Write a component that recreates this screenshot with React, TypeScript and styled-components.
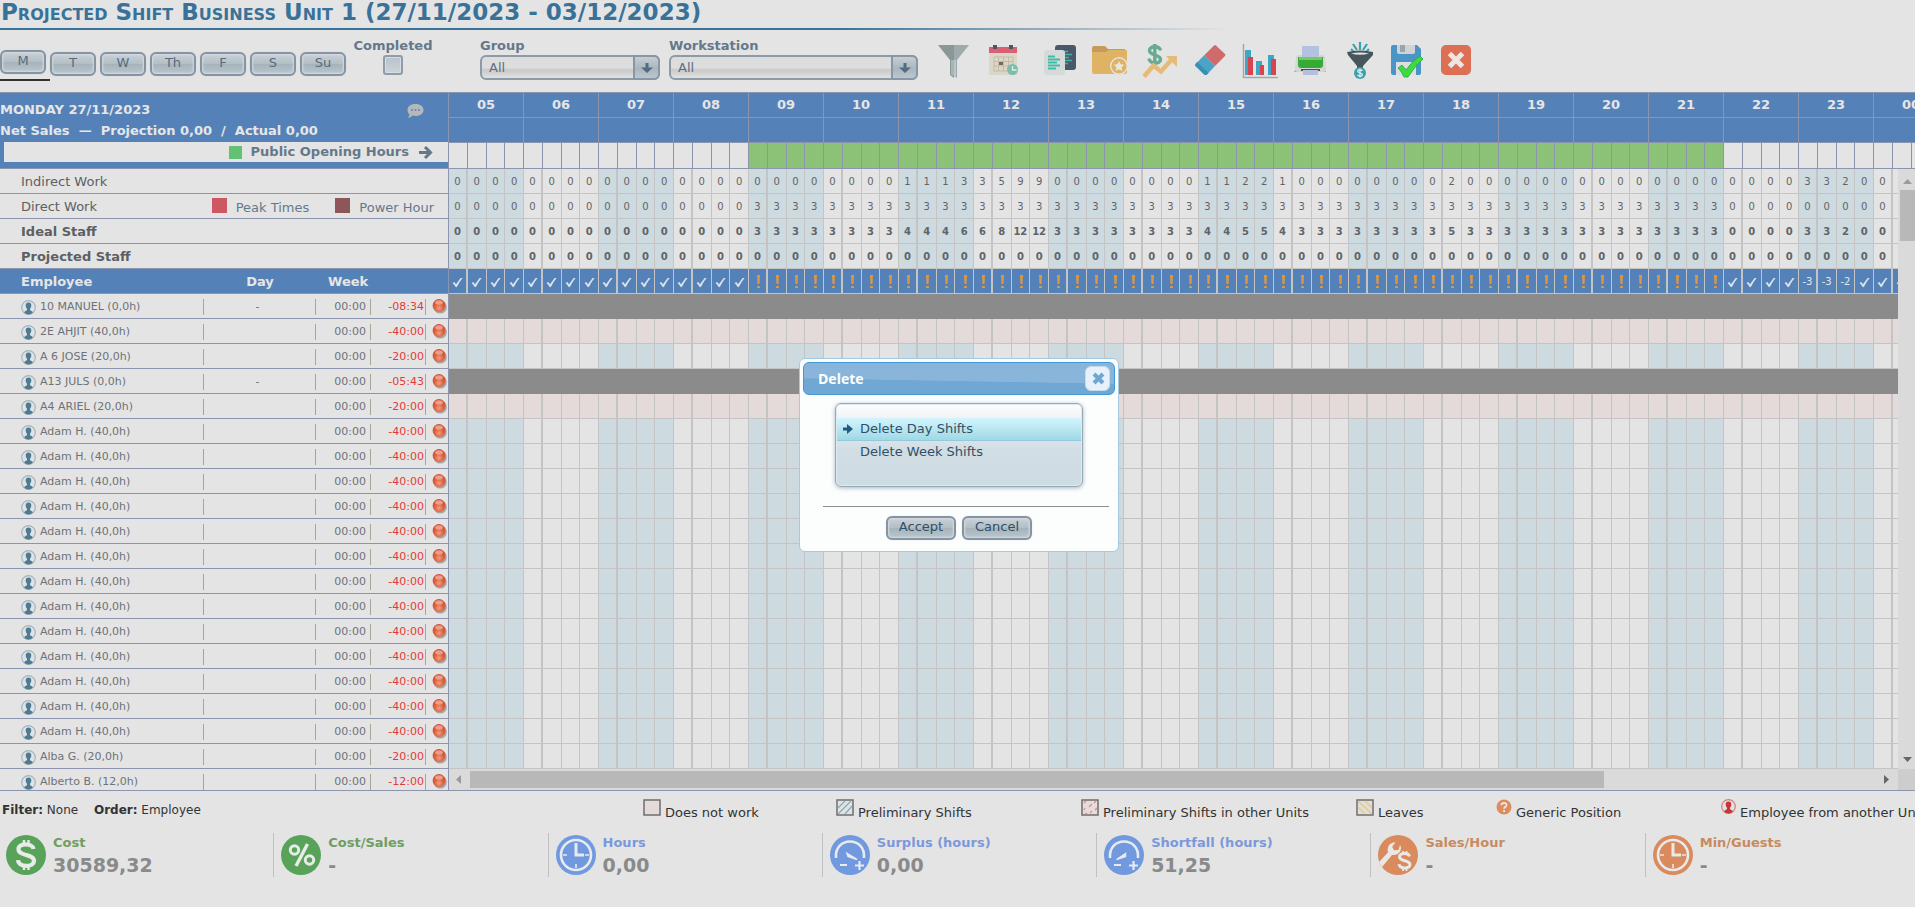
import React from "react";
import styled, { createGlobalStyle, css } from "styled-components";

const GlobalStyle = createGlobalStyle`
  *, *::before, *::after { box-sizing: border-box; }
  body {
    margin: 0;
    background: #e4e4e4;
    color: #333;
    font: 13px/16px "DejaVu Sans", Verdana, sans-serif;
    overflow: hidden;
  }
  button, select { font: inherit; margin: 0; }
`;

const LINE = "#8c95ad";
const BLUE = "#5482b8";
const CELL_LINE = "#c4c4c4";

/* ---------- title ---------- */

const Title = styled.h1`
  margin: 0;
  height: 28px;
  padding-left: 1px;
  overflow: hidden;
  font-size: 23px;
  line-height: 24px;
  font-weight: bold;
  font-variant: small-caps;
  white-space: nowrap;
  color: #387299;
`;

const TitleRule = styled.div`
  width: 1230px;
  max-width: 100%;
  height: 2px;
  background: linear-gradient(to right, #387299 68%, #e4e4e4);
`;

/* ---------- toolbar ---------- */

const Toolbar = styled.div`
  display: flex;
  align-items: flex-start;
  height: 62px;
`;

const Days = styled.div`
  display: flex;
  padding-top: 20px;
`;

const DayTab = styled.div<{ $active: boolean }>`
  width: 50px;
  height: 31px;
  padding: ${(p) => (p.$active ? "0 4px 5px 0" : "2px 4px 0 0")};
  border-bottom: 2px solid ${(p) => (p.$active ? "#333" : "transparent")};
`;

const metal = css`
  border: 2px solid #8494a2;
  border-radius: 6px;
  background: linear-gradient(#cbd1d6 0%, #b3bec6 48%, #a6b3bc 52%, #bac6cd 100%);
  box-shadow: inset 0 0 2px 1px #d5dbe0, 0 0 1px #b4bfc8;
`;

const PushButton = styled.button<{ $width: number; $dark?: boolean }>`
  ${metal}
  width: ${(p) => p.$width}px;
  height: 24px;
  padding: 0 0 2px;
  line-height: 18px;
  text-align: center;
  color: ${(p) => (p.$dark ? "#2f4f66" : "#586b7c")};
`;

const Field = styled.label<{ $width: number; $left: number; $center?: boolean }>`
  display: flex;
  flex-direction: column;
  align-items: ${(p) => (p.$center ? "center" : "stretch")};
  gap: 1px;
  width: ${(p) => p.$width}px;
  margin-left: ${(p) => p.$left}px;
  padding-top: 8px;
  font-weight: bold;
  white-space: nowrap;
  color: #64788c;
`;

const CheckInput = styled.input`
  appearance: none;
  margin: 0;
  width: 20px;
  height: 20px;
  border: 2px solid #8e9dab;
  border-radius: 3px;
  background: linear-gradient(#b9c2ca, #cdd3d8);
  box-shadow: inset 0 0 0 1px #d7dce0;
`;

const SelectBox = styled.span`
  display: grid;
  grid-template-columns: 1fr 27px;
  height: 25px;
`;

const SelectInput = styled.select`
  grid-area: 1 / 1 / 2 / 3;
  appearance: none;
  width: 100%;
  height: 25px;
  padding: 1px 30px 0 7px;
  border: 2px solid #8c9ba8;
  border-radius: 6px;
  background: linear-gradient(#dcdcdc 0%, #dedede 50%, #c9c9c9 62%, #e2e2e2 100%);
  font-weight: normal;
  color: #5b6f82;
`;

const SelectArrow = styled.span`
  grid-area: 1 / 2 / 2 / 3;
  display: flex;
  align-items: center;
  justify-content: center;
  border: 2px solid #8797a5;
  border-radius: 0 6px 6px 0;
  background: linear-gradient(#c6cdd3, #a9b6c0 55%, #bcc7cf);
  pointer-events: none;
`;

const Tools = styled.div`
  display: flex;
  padding: 10px 0 0 11px;
`;

const ToolButton = styled.button<{ $after?: number }>`
  display: flex;
  justify-content: center;
  width: 50px;
  height: 40px;
  margin-right: ${(p) => p.$after ?? 0}px;
  padding: 0;
  border: 0;
  background: none;
`;

/* ---------- workspace ---------- */

const Workspace = styled.main`
  display: grid;
  grid-template-columns: 449px minmax(0, 1fr);
  border-top: 1px solid ${LINE};
  border-bottom: 1px solid ${LINE};
`;

const LeftPanel = styled.section`
  min-width: 0;
  border-right: 1px solid ${LINE};
`;

const DayHeader = styled.header`
  height: 76px;
  padding-top: 6px;
  border-bottom: 1px solid ${LINE};
  background: ${BLUE};
  color: #e6e6e6;
  font-weight: bold;
`;

const HeaderLine = styled.div`
  display: flex;
  align-items: center;
  justify-content: space-between;
  height: 21px;
  padding: 0 24px 0 0;
  white-space: pre;
`;

const OpeningBar = styled.div`
  display: flex;
  align-items: center;
  justify-content: flex-end;
  gap: 9px;
  height: 20px;
  margin: 1px 0 0 4px;
  padding-right: 15px;
  background: #e4e4e4;
  color: #64788c;
  white-space: nowrap;
`;

const Swatch = styled.i<{ $color: string; $size: number }>`
  flex: none;
  width: ${(p) => p.$size}px;
  height: ${(p) => p.$size}px;
  background: ${(p) => p.$color};
`;

const Scroller = styled.div`
  height: calc(100vh - 286px);
  overflow: hidden;
`;

const StaffTable = styled.table`
  width: 100%;
  table-layout: fixed;
  border-spacing: 0;
  white-space: nowrap;
`;

const SummaryCell = styled.th<{ $bold?: boolean }>`
  height: 25px;
  padding: 2px 14px 0 21px;
  border-bottom: 1px solid ${LINE};
  text-align: left;
  font-weight: ${(p) => (p.$bold ? "bold" : "normal")};
  color: #5c6064;
`;

const SummaryLine = styled.div`
  display: flex;
  align-items: center;
  justify-content: space-between;
  height: 18px;
`;

const Key = styled.span`
  display: inline-flex;
  align-items: flex-end;
  gap: 9px;
  height: 18px;
  margin-left: 26px;
  color: #64788c;
  i { align-self: flex-start; }
`;

const ColumnTitle = styled.th<{ $left?: number; $center?: boolean }>`
  height: 25px;
  padding: 1px 0 0 ${(p) => p.$left ?? 0}px;
  border-bottom: 1px solid ${LINE};
  background: ${BLUE};
  color: #e6e6e6;
  text-align: ${(p) => (p.$center ? "center" : "left")};
`;

const StaffCell = styled.td`
  height: 25px;
  padding: 2px 0 0;
  border-bottom: 1px solid ${LINE};
  font-size: 11px;
  color: #6e7278;
`;

const CellInner = styled.div<{ $align?: string; $red?: boolean; $plain?: boolean }>`
  display: flex;
  align-items: center;
  justify-content: ${(p) => p.$align ?? "flex-start"};
  gap: 4px;
  height: 16px;
  padding: 0 ${(p) => (p.$red ? 1 : 4)}px 0 0;
  border-right: ${(p) => (p.$plain ? "0" : "1px solid #a5a598")};
  color: ${(p) => (p.$red ? "#e23a3a" : "inherit")};
`;

const PersonInner = styled(CellInner)`
  padding-left: 21px;
`;

/* ---------- schedule ---------- */

const Schedule = styled.section`
  min-width: 0;
  overflow: hidden;
`;

const HourTable = styled.table`
  width: 1500px;
  table-layout: fixed;
  border-spacing: 0;
`;

const HourTitle = styled.th`
  height: 25px;
  padding: 0;
  border-right: 1px solid #8c95ad;
  border-bottom: 1px solid #8c95ad;
  background: ${BLUE};
  color: #e6e6e6;
`;

const OpenCell = styled.td<{ $open: boolean }>`
  height: 26px;
  padding: 0;
  border-right: 1px solid ${LINE};
  border-bottom: 1px solid ${LINE};
  background: ${(p) => (p.$open ? "#8bc278" : "#e4e4e4")};
`;

const ScheduleView = styled.div`
  display: grid;
  grid-template-columns: minmax(0, 1fr) 17px;
  grid-template-rows: minmax(0, 1fr) 21px;
  height: calc(100vh - 286px);
`;

const TableClip = styled.div`
  overflow: hidden;
`;

type Tone = "band" | "plain" | "pink" | "gray" | "blue";
const toneColor: Record<Tone, string> = {
  band: "#cddadf",
  plain: "#e4e4e4",
  pink: "#e5dada",
  gray: "#8b8b8b",
  blue: BLUE,
};

const Slot = styled.td<{ $tone: Tone; $wide: boolean; $bold?: boolean }>`
  height: 25px;
  padding: 2px 0 0;
  border: 0 solid ${(p) => (p.$tone === "gray" ? "#8b8b8b" : CELL_LINE)};
  border-right-width: ${(p) => (p.$wide ? 2 : 1)}px;
  border-bottom-width: 1px;
  background: ${(p) => toneColor[p.$tone]};
  color: ${(p) => (p.$tone === "blue" ? "#e6e6e6" : "#606468")};
  font-size: 10px;
  font-weight: ${(p) => (p.$bold ? "bold" : "normal")};
  text-align: center;
  line-height: 12px;
  svg { display: block; margin: 0 auto; }
`;

const VBar = styled.div`
  display: flex;
  flex-direction: column;
  align-items: center;
  background: #dadada;
  padding: 8px 0 5px 2px;
`;

const VThumb = styled.div`
  width: 15px;
  height: 51px;
  margin: 4px 0 auto;
  background: #b8b8b8;
`;

const HBar = styled.div`
  display: flex;
  align-items: center;
  padding: 0 8px 0 6px;
  background: #dadada;
`;

const HThumb = styled.div`
  width: 79%;
  height: 17px;
  margin: 0 auto 0 6px;
  background: #b8b8b8;
`;

const Corner = styled.div`
  background: #cdcdcd;
`;

/* ---------- footer ---------- */

const LegendRow = styled.div`
  display: grid;
  grid-template-columns: 643px minmax(0, 1fr);
  height: 42px;
  overflow: hidden;
  white-space: nowrap;
`;

const FilterText = styled.p`
  margin: 0;
  padding: 11px 0 0 2px;
  font-size: 12px;
  b:last-of-type { margin-left: 12px; }
`;

const LegendItems = styled.div`
  display: grid;
  grid-template-columns: 193fr 245fr 275fr 140fr 225fr 194fr;
  padding-top: 8px;
`;

const LegendItem = styled.span`
  display: flex;
  gap: 4px;
  width: 0;
  line-height: 28px;
  svg { flex: none; }
`;

const Kpis = styled.div`
  display: grid;
  grid-template-columns: repeat(7, minmax(0, 1fr));
  margin: 0 -4px 0 -1px;
`;

const Kpi = styled.div`
  display: flex;
  gap: 7px;
  height: 44px;
  padding: 2px 0 0 7px;
  & + & { border-left: 1px solid #c0c0c0; }
`;

const KpiText = styled.div<{ $color: string }>`
  font-weight: bold;
  white-space: nowrap;
  color: ${(p) => p.$color};
  strong {
    display: block;
    margin-top: 2px;
    font-size: 19px;
    line-height: 24px;
    color: #8a8a8a;
  }
`;

/* ---------- dialog ---------- */

const Overlay = styled.div`
  position: fixed;
  inset: 0;
  display: grid;
  place-items: center;
  padding: 3px 0 0 3px;
`;

const Dialog = styled.div`
  width: 320px;
  height: 194px;
  padding: 3px;
  border: 1px solid #a6c9e2;
  border-radius: 6px;
  background: #fcfdfd;
`;

const DialogBar = styled.div`
  display: flex;
  align-items: center;
  justify-content: space-between;
  height: 33px;
  padding: 0 4px 0 14px;
  border: 1px solid #4297d7;
  border-radius: 6px;
  background: linear-gradient(181deg, #89b5da 0 56%, #71a8d3 58% 100%);
  color: #fff;
  font: bold 14px/20px "Open Sans", sans-serif;
`;

const CloseButton = styled.button`
  display: flex;
  align-items: center;
  justify-content: center;
  width: 25px;
  height: 25px;
  padding: 0 0 0 2px;
  border: 1px solid #c5dbec;
  border-radius: 6px;
  background: #e8f1fa;
`;

const OptionList = styled.div`
  height: 84px;
  width: 248px;
  margin: 8px 0 0 32px;
  padding: 14px 1px 0;
  border: 1px solid #94aab6;
  border-radius: 6px;
  background: linear-gradient(#fdfdfe 0%, #e6ebef 30%, #d2dde4 55%, #cedce3 100%);
  box-shadow: inset 0 0 0 1px #dcebf2, 0 1px 4px #a9b6c0;
`;

const Option = styled.button<{ $selected: boolean }>`
  display: flex;
  align-items: center;
  gap: 7px;
  width: 100%;
  height: 23px;
  padding: 0 0 1px 6px;
  border: 0;
  border-bottom: 1px solid ${(p) => (p.$selected ? "#8fcbdb" : "transparent")};
  background: ${(p) => (p.$selected ? "linear-gradient(#d3f5fd, #a0d8e5)" : "none")};
  color: #2f5068;
  text-align: left;
`;

const DialogRule = styled.hr`
  width: 286px;
  height: 1px;
  margin: 19px 0 9px 20px;
  border: 0;
  background: #8f8f8f;
`;

const DialogActions = styled.div`
  display: flex;
  justify-content: center;
  gap: 6px;
`;

/* ---------- icons ---------- */

const Svg = ({ size = 40, children }: { size?: number; children: React.ReactNode }) => (
  <svg width={size} height={size} viewBox={`0 0 ${size} ${size}`} fill="none" aria-hidden="true">
    {children}
  </svg>
);

const FunnelIcon = () => (
  <Svg>
    <path d="M4 5h16v33l-4-3V20z" fill="#8a9797" />
    <path d="M20 5h15L23 20v18l-3-2z" fill="#9eabac" />
    <path d="M17 20h3v16l-3-1z" fill="#a9b4b7" />
    <path d="M20 20h2v17l-2-1z" fill="#bcc5c8" />
  </Svg>
);

const CalendarIcon = () => (
  <Svg>
    <path d="M5 12h28v23H5z" fill="#dad6c8" />
    <path d="M5 7h28v6H5z" fill="#da5f70" />
    <path d="M9 5h4v4H9zM25 5h4v4h-4z" fill="#46586b" />
    <path d="M10 17h19v14H10zM10 21.500h19M10 26h19M14.500 17v14M19.500 17v14M24.500 17v14" stroke="#c3bba6" />
    <path d="M15 22h4v3h-4z" fill="#7f6456" />
    <circle cx="28.500" cy="29.500" r="5.500" fill="#7dbdab" />
    <path d="M28.500 26v4h4" stroke="#dfeee8" strokeWidth="1.300" />
  </Svg>
);

const PagesIcon = () => (
  <Svg>
    <rect x="15" y="5" width="21" height="25" rx="3" fill="#4a5969" />
    <path d="M22 11.500h6M22 14.500h10M22 17.500h7M22 20.500h10M22 23.500h6" stroke="#42b3a2" strokeWidth="1.500" />
    <rect x="4" y="10" width="21" height="25" rx="3" fill="#d4dada" />
    <path d="M8 16.500h7M8 19.500h12M8 22.500h9M8 25.500h12M8 28.500h8" stroke="#42bba6" strokeWidth="1.900" />
  </Svg>
);

const FolderIcon = () => (
  <Svg>
    <path d="M2 8q0-2 2-2h11l3 3h17v6H2z" fill="#c59a5c" />
    <path d="M2 12h14l3-2h17q1 0 1 1v21q0 2-2 2H4q-2 0-2-2z" fill="#e0b364" />
    <circle cx="29" cy="26" r="9" fill="#e4e4e4" />
    <circle cx="29" cy="26" r="7.600" fill="#e0b364" />
    <path d="M29 21l1.600 3.300 3.600.5-2.600 2.500.6 3.600-3.200-1.700-3.200 1.700.6-3.600-2.600-2.500 3.600-.5z" fill="#e9e6df" />
  </Svg>
);

const MoneyTrendIcon = () => (
  <Svg>
    <path d="M20.500 10.500c-1-5-11-5-11 0 0 5.500 11 3.500 11 9 0 5-11 5-11.500-1M14.800 4v22" stroke="#68ab90" strokeWidth="3.400" />
    <path d="M4 36.500l9.500-11 7.500 6L33 18" stroke="#e5bb78" strokeWidth="4.500" />
    <path d="M26 16h11v11z" fill="#e5bb78" />
  </Svg>
);

const EraserIcon = () => (
  <Svg>
    <path d="M24 5.500q1-1 2 0l9 8.500q1 1 0 2l-10 10L14 15.500z" fill="#cd6c6a" />
    <path d="M14 15.500L25 26l-8 8.500q-1.500 1-3 0l-8.500-8.200q-1-1.300 0-2.300z" fill="#4ba3c5" />
    <path d="M5 25l9 9.300q2 1.200 3 .2l1.500-1.700L7 22z" fill="#3a8fb1" />
  </Svg>
);

const ChartIcon = () => (
  <Svg>
    <path d="M3.500 4v33.500H38" stroke="#a3a6a8" strokeWidth="1.400" />
    <path d="M5 10h6v25H5zM16 21h6v14h-6zM28 15h6v20h-6z" fill="#3ea5c4" />
    <path d="M8 17h5v18H8zM20 25h4v10h-4zM31 19h5v16h-5z" fill="#d8444e" />
  </Svg>
);

const PrinterIcon = () => (
  <Svg>
    <path d="M4 32q0-2 3-2h26q3 0 3 2z" fill="#a9aca9" />
    <path d="M6 17q0-2 3-2h23q3 0 3 2l1 12q0 3-3 3H8q-3 0-3-3z" fill="#d3d6d3" />
    <path d="M12 6h17v12H12z" fill="#b4c1df" />
    <path d="M8 17h25v8q0 3-3 3H11q-3 0-3-3z" fill="#35ab35" />
    <path d="M9 17h23v3H9z" fill="#6fcb62" />
    <path d="M11 29h19v2H11z" fill="#4b514a" />
    <path d="M13 30h15v5H13z" fill="#b4bfe0" />
  </Svg>
);

const SalesFunnelIcon = () => (
  <Svg>
    <path d="M13 4l4 6M20 2v8M27 4l-4 6M11 9l3 3M29 9l-3 3" stroke="#3aa3ab" strokeWidth="2.200" />
    <path d="M7 12q13-3 26 0v3l-10 11v3h-6v-3L8 15z" fill="#47555c" />
    <path d="M11 13.500q9-2 18 0q-9 2.500-18 0" fill="#e4e4e4" />
    <circle cx="20" cy="33" r="6" fill="#3aa0ab" />
    <path d="M22.300 31c-.5-1.800-4.600-1.600-4.600.3s4.700 1.300 4.700 3.400-4.500 2-4.800 0M20 28.500v9" stroke="#dcecee" strokeWidth="1.300" />
  </Svg>
);

const SaveIcon = () => (
  <Svg>
    <path d="M1 7q0-2 2-2h24l4 4v24q0 2-2 2H3q-2 0-2-2z" fill="#4b94c8" />
    <path d="M7 5h18v7q0 2-2 2H9q-2 0-2-2z" fill="#cfd3d4" />
    <path d="M10 5h5v7h-5z" fill="#98a5ae" />
    <path d="M6 22h20v13H6z" fill="#dcdfe0" />
    <path d="M8 28l4-3 4 5q6-9 14-14l3 3q-8 7-15 18h-4q-2-5-6-9z" fill="#3edb3e" stroke="#1fa843" strokeWidth=".8" />
  </Svg>
);

const ExitIcon = () => (
  <Svg>
    <rect x="1" y="5" width="30" height="30" rx="5" fill="#dd6f55" />
    <path d="M9.500 13.500l13 13M22.500 13.500l-13 13" stroke="#ece6e4" strokeWidth="5" />
  </Svg>
);

const DownArrow = () => (
  <Svg size={12}>
    <path d="M4.500 1h3v4.500H12L6 11 0 5.500h4.500z" fill="#546c80" />
  </Svg>
);

const RightArrow = () => (
  <Svg size={15}>
    <path d="M1 7.500h11M7 2l5.500 5.500L7 13" stroke="#64788c" strokeWidth="3" />
  </Svg>
);

const BubbleIcon = () => (
  <Svg size={17}>
    <path d="M8.500 3c5 0 8 2.600 8 6s-3 6-8 6q-1.500 0-3-.4Q3.500 17 1 17q1.500-1.500 1.300-4Q.5 12 .5 9c0-3.400 3-6 8-6z" fill="#b5b8bb" />
    <circle cx="5" cy="9" r="1" fill="#5d87b6" />
    <circle cx="8.500" cy="9" r="1" fill="#5d87b6" />
    <circle cx="12" cy="9" r="1" fill="#5d87b6" />
  </Svg>
);

const PersonIcon = ({ color = "#4f7a90", ring = "#a3b4bd" }: { color?: string; ring?: string }) => (
  <Svg size={15}>
    <circle cx="7.500" cy="7.500" r="6.800" fill="#dde3e6" stroke={ring} strokeWidth="1.200" />
    <path d="M7.500 2.500c2 0 2.800 1.300 2.800 3S9.500 8 9 8.800v1.400c1.500.6 2.500 1 2.800 2.300-1.100 1.200-2.700 1.900-4.300 1.900s-3.200-.7-4.300-1.900C3.500 11.200 4.500 10.800 6 10.200V8.800C5.500 8 4.700 7.200 4.700 5.500s.8-3 2.800-3z" fill={color} />
  </Svg>
);

const RedBall = () => (
  <svg width="15" height="16" viewBox="0 0 15 16" aria-hidden="true">
    <defs>
      <radialGradient id="ball" cx="50%" cy="70%" r="70%">
        <stop offset="0" stopColor="#f0a07c" />
        <stop offset=".5" stopColor="#dc5f40" />
        <stop offset="1" stopColor="#cf4a30" />
      </radialGradient>
    </defs>
    <circle cx="8.200" cy="8" r="6.600" fill="#8a8a8a" opacity=".7" />
    <circle cx="7" cy="6.500" r="6.400" fill="url(#ball)" />
    <ellipse cx="7" cy="3.500" rx="3.800" ry="2.200" fill="#efb09c" opacity=".8" />
  </svg>
);

const CheckIcon = () => (
  <Svg size={11}>
    <path d="M.5 6l1.900-1L4 7.300 8.600 1l2 .1Q7 5.500 5 9.800q-.8.800-1.500 0Q2.300 7.500.5 6z" fill="#d9e1ea" />
  </Svg>
);

const AlertIcon = () => (
  <svg width="5" height="14" viewBox="0 0 5 14" aria-hidden="true">
    <path d="M2 0h3l-.5 9h-2zM2 11h3v2H2z" fill="#e09640" />
  </svg>
);

const HatchIcon = ({ lines, fill = "#e0e4e6", d }: { lines?: string; fill?: string; d?: string }) => (
  <svg width="18" height="17" viewBox="0 0 18 17" fill="none" aria-hidden="true">
    <rect x="1" y="1" width="16" height="15" fill={fill} stroke="#6e6e6e" strokeWidth="1.500" />
    {d && <path d={d} stroke={lines} strokeWidth="1.200" />}
  </svg>
);

const QuestionIcon = () => (
  <Svg size={16}>
    <circle cx="8" cy="8" r="7.500" fill="#dc8d5e" />
    <path d="M5.500 6.200c.2-3.300 5.200-3 5 0-.1 1.600-2.400 1.700-2.400 3.600M8.100 11v2" stroke="#f0e6df" strokeWidth="1.800" />
  </Svg>
);

const GREEN = "#58a25a";
const SKY = "#7099df";
const ORANGE = "#d98b5d";

const DollarBadge = () => (
  <Svg>
    <circle cx="20" cy="20" r="20" fill={GREEN} />
    <path d="M27.500 14c-.8-6-15-6.500-15 .2 0 7.300 15.500 4.300 15.500 11.600 0 7-15.500 6.800-16-.6" stroke="#e8ece8" strokeWidth="4.200" />
    <path d="M18 5v5M22.500 5v5M18 30v5M22.500 30v5" stroke="#e8ece8" strokeWidth="2.400" />
  </Svg>
);

const PercentBadge = () => (
  <Svg>
    <circle cx="20" cy="20" r="20" fill={GREEN} />
    <circle cx="13.500" cy="15" r="4.200" stroke="#e8ece8" strokeWidth="3" />
    <circle cx="28.500" cy="25" r="4.200" stroke="#e8ece8" strokeWidth="3" />
    <path d="M26.500 9L15 31" stroke="#e8ece8" strokeWidth="3.400" />
  </Svg>
);

const ClockBadge = ({ color }: { color: string }) => (
  <Svg>
    <circle cx="20" cy="20" r="20" fill={color} />
    <circle cx="20" cy="20" r="15" stroke="#e8eaee" strokeWidth="2.600" />
    <path d="M20 8v12h8" stroke="#e8eaee" strokeWidth="3" />
    <path d="M20 29v4M7 20h4M29 20h4" stroke="#e8eaee" strokeWidth="1.600" />
  </Svg>
);

const GaugeBadge = ({ left }: { left?: boolean }) => (
  <Svg>
    <circle cx="20" cy="20" r="20" fill={SKY} />
    <path d="M6 23C4 1 36 1 34 23" stroke="#e8eaee" strokeWidth="2.600" />
    <path d={left ? "M21.500 18.500l-9 6 9-3z" : "M17 18.500l10 6-9-3z"} fill="#e8eaee" stroke="#e8eaee" strokeWidth="1.500" />
    <path d="M10 30h7M25 30.500h9M29.500 26v9" stroke="#e8eaee" strokeWidth="2.200" />
  </Svg>
);

const WrenchBadge = () => (
  <Svg>
    <circle cx="20" cy="20" r="20" fill={ORANGE} />
    <path d="M1 27L10 17.500Q8 10 15 7.500l2.500-.3-3.300 4.500 1.800 3.500 4.500-.2 1.500-5q2 3 0 6.500-2.500 4-8 3.500L4 32z" fill="#ebe7e4" />
    <path d="M31.500 21.500c-.6-4-10-4.300-10 .2 0 5 10.500 3 10.500 7.800 0 4.800-10.500 4.500-11-.4" stroke="#ebe7e4" strokeWidth="3" />
    <path d="M25 16v3M28.500 16v3M25 33v3M28.500 33v3" stroke="#ebe7e4" strokeWidth="1.800" />
  </Svg>
);

const Triangle = ({ d, color }: { d: string; color: string }) => (
  <Svg size={9}>
    <path d={d} fill={color} />
  </Svg>
);

/* ---------- data ---------- */

const days = ["M", "T", "W", "Th", "F", "S", "Su"];
const hours = Array.from({ length: 20 }, (_, i) => String((i + 5) % 24).padStart(2, "0"));
const slots = Array.from({ length: 80 }, (_, i) => i);

const spread = (overrides: Record<string, number[]>, base: (hour: number) => number) =>
  hours.flatMap((h) => overrides[h] ?? [0, 0, 0, 0].map(() => base(Number(h))));

const isOpen = (hour: number) => hour >= 9 && hour < 22;

const indirect = spread(
  { "11": [1, 1, 1, 3], "12": [3, 5, 9, 9], "15": [1, 1, 2, 2], "16": [1, 0, 0, 0], "18": [0, 2, 0, 0], "23": [3, 3, 2, 0] },
  () => 0
);
const direct = spread({}, (h) => (isOpen(h) ? 3 : 0));
const ideal = indirect.map((n, i) => n + direct[i]);
const projected = slots.map(() => 0);

const employees: { name: string; day?: string; week: string; tone?: Tone }[] = [
  { name: "10 MANUEL (0,0h)", day: "-", week: "-08:34", tone: "gray" },
  { name: "2E AHJIT (40,0h)", week: "-40:00", tone: "pink" },
  { name: "A 6 JOSE (20,0h)", week: "-20:00" },
  { name: "A13 JULS (0,0h)", day: "-", week: "-05:43", tone: "gray" },
  { name: "A4 ARIEL (20,0h)", week: "-20:00", tone: "pink" },
  ...Array.from({ length: 13 }, () => ({ name: "Adam H. (40,0h)", week: "-40:00" })),
  { name: "Alba G. (20,0h)", week: "-20:00" },
  { name: "Alberto B. (12,0h)", week: "-12:00" },
];

const tools: { name: string; icon: React.ReactNode; after?: number }[] = [
  { name: "Filter", icon: <FunnelIcon /> },
  { name: "Calendar", icon: <CalendarIcon />, after: 6 },
  { name: "Copy", icon: <PagesIcon /> },
  { name: "Favourites", icon: <FolderIcon /> },
  { name: "Sales", icon: <MoneyTrendIcon /> },
  { name: "Delete", icon: <EraserIcon /> },
  { name: "Charts", icon: <ChartIcon /> },
  { name: "Print", icon: <PrinterIcon /> },
  { name: "Sales funnel", icon: <SalesFunnelIcon /> },
  { name: "Save", icon: <SaveIcon /> },
  { name: "Close", icon: <ExitIcon /> },
];

const legend = [
  { text: "Does not work", icon: <HatchIcon fill="#e5dada" /> },
  { text: "Preliminary Shifts", icon: <HatchIcon lines="#8aa9b5" d="M2 9L9 2M2 15L15 2M9 15l7-8" /> },
  { text: "Preliminary Shifts in other Units", icon: <HatchIcon fill="#e6dcdc" lines="#d98a8a" d="M3 4l2-2M8 8l3-3M13 4l2-2M3 11l1-2M9 14l2-2M14 11l2-2M4 15l2-1" /> },
  { text: "Leaves", icon: <HatchIcon fill="#e2e0d6" lines="#e0c890" d="M2 2l14 13M9 2l7 7M2 8l7 7" /> },
  { text: "Generic Position", icon: <QuestionIcon /> },
  { text: "Employee from another Unit", icon: <PersonIcon color="#c93434" ring="#d87c7c" /> },
];

const kpis = [
  { label: "Cost", value: "30589,32", color: "#6f9d62", icon: <DollarBadge /> },
  { label: "Cost/Sales", value: "-", color: "#6f9d62", icon: <PercentBadge /> },
  { label: "Hours", value: "0,00", color: "#7c98da", icon: <ClockBadge color={SKY} /> },
  { label: "Surplus (hours)", value: "0,00", color: "#7c98da", icon: <GaugeBadge /> },
  { label: "Shortfall (hours)", value: "51,25", color: "#7c98da", icon: <GaugeBadge left /> },
  { label: "Sales/Hour", value: "-", color: "#c68b62", icon: <WrenchBadge /> },
  { label: "Min/Guests", value: "-", color: "#c68b62", icon: <ClockBadge color={ORANGE} /> },
];

/* ---------- pieces ---------- */

const SelectField = ({ label, width, left }: { label: string; width: number; left: number }) => (
  <Field $width={width} $left={left}>
    {label}
    <SelectBox>
      <SelectInput defaultValue="All">
        <option>All</option>
      </SelectInput>
      <SelectArrow>
        <DownArrow />
      </SelectArrow>
    </SelectBox>
  </Field>
);

const SlotRow = ({ tone, bold, render }: { tone?: Tone; bold?: boolean; render?: (i: number) => React.ReactNode }) => (
  <tr>
    {slots.map((i) => (
      <Slot
        key={i}
        $tone={tone ?? (Math.floor(i / 4) % 2 === 0 ? "band" : "plain")}
        $wide={i % 4 === 0}
        $bold={bold}
      >
        {render?.(i)}
      </Slot>
    ))}
  </tr>
);

const balance = (i: number) => {
  const hour = Number(hours[Math.floor(i / 4)]);
  if (isOpen(hour)) return <AlertIcon />;
  if (ideal[i] > 0) return `-${ideal[i]}`;
  return <CheckIcon />;
};

export default function App() {
  return (
    <>
      <GlobalStyle />
      <Title>Projected Shift Business Unit 1 (27/11/2023 - 03/12/2023)</Title>
      <TitleRule />

      <Toolbar>
        <Days>
          {days.map((d, i) => (
            <DayTab key={d} $active={i === 0}>
              <PushButton $width={46}>{d}</PushButton>
            </DayTab>
          ))}
        </Days>
        <Field $width={74} $left={6} $center>
          Completed
          <CheckInput type="checkbox" />
        </Field>
        <SelectField label="Group" width={180} left={50} />
        <SelectField label="Workstation" width={249} left={9} />
        <Tools>
          {tools.map((t) => (
            <ToolButton key={t.name} $after={t.after} aria-label={t.name}>
              {t.icon}
            </ToolButton>
          ))}
        </Tools>
      </Toolbar>

      <Workspace>
        <LeftPanel>
          <DayHeader>
            <HeaderLine>
              MONDAY 27/11/2023
              <BubbleIcon />
            </HeaderLine>
            <HeaderLine>{"Net Sales  —  Projection 0,00  /  Actual 0,00"}</HeaderLine>
            <OpeningBar>
              <Swatch $color="#63c174" $size={13} />
              Public Opening Hours
              <RightArrow />
            </OpeningBar>
          </DayHeader>
          <Scroller>
            <StaffTable>
              <colgroup>
                <col width="204" />
                <col width="112" />
                <col width="55" />
                <col width="55" />
                <col width="22" />
              </colgroup>
              <thead>
                <tr><SummaryCell colSpan={5}>Indirect Work</SummaryCell></tr>
                <tr>
                  <SummaryCell colSpan={5}>
                    <SummaryLine>
                      Direct Work
                      <span>
                        <Key><Swatch $color="#cd5862" $size={15} />Peak Times</Key>
                        <Key><Swatch $color="#8d5759" $size={15} />Power Hour</Key>
                      </span>
                    </SummaryLine>
                  </SummaryCell>
                </tr>
                <tr><SummaryCell colSpan={5} $bold>Ideal Staff</SummaryCell></tr>
                <tr><SummaryCell colSpan={5} $bold>Projected Staff</SummaryCell></tr>
                <tr>
                  <ColumnTitle $left={21}>Employee</ColumnTitle>
                  <ColumnTitle $center>Day</ColumnTitle>
                  <ColumnTitle $left={12} colSpan={2}>Week</ColumnTitle>
                  <ColumnTitle />
                </tr>
              </thead>
              <tbody>
                {employees.map((e, i) => (
                  <tr key={i}>
                    <StaffCell><PersonInner><PersonIcon />{e.name}</PersonInner></StaffCell>
                    <StaffCell><CellInner $align="center">{e.day}</CellInner></StaffCell>
                    <StaffCell><CellInner $align="flex-end">00:00</CellInner></StaffCell>
                    <StaffCell><CellInner $align="flex-end" $red>{e.week}</CellInner></StaffCell>
                    <StaffCell><CellInner $align="flex-end" $plain $red><RedBall /></CellInner></StaffCell>
                  </tr>
                ))}
              </tbody>
            </StaffTable>
          </Scroller>
        </LeftPanel>

        <Schedule>
          <HourTable>
            <colgroup>{slots.map((i) => <col key={i} />)}</colgroup>
            <thead>
              <tr>{hours.map((h) => <HourTitle key={h} colSpan={4}>{h}</HourTitle>)}</tr>
              <tr>{hours.map((h) => <HourTitle key={h} colSpan={4} />)}</tr>
            </thead>
            <tbody>
              <tr>{slots.map((i) => <OpenCell key={i} $open={isOpen(Number(hours[Math.floor(i / 4)]))} />)}</tr>
            </tbody>
          </HourTable>
          <ScheduleView>
            <TableClip>
              <HourTable>
                <colgroup>{slots.map((i) => <col key={i} />)}</colgroup>
                <tbody>
                  <SlotRow render={(i) => indirect[i]} />
                  <SlotRow render={(i) => direct[i]} />
                  <SlotRow bold render={(i) => ideal[i]} />
                  <SlotRow bold render={(i) => projected[i]} />
                  <SlotRow tone="blue" render={balance} />
                  {employees.map((e, i) => <SlotRow key={i} tone={e.tone} />)}
                </tbody>
              </HourTable>
            </TableClip>
            <VBar>
              <Triangle d="M0 7h9L4.500 2z" color="#9a9a9a" />
              <VThumb />
              <Triangle d="M0 2h9L4.500 7z" color="#666" />
            </VBar>
            <HBar>
              <Triangle d="M6 0v9L1 4.500z" color="#9a9a9a" />
              <HThumb />
              <Triangle d="M3 0v9l5-4.500z" color="#666" />
            </HBar>
            <Corner />
          </ScheduleView>
        </Schedule>
      </Workspace>

      <footer>
        <LegendRow>
          <FilterText>
            <b>Filter:</b> None <b>Order:</b> Employee
          </FilterText>
          <LegendItems>
            {legend.map((l) => (
              <LegendItem key={l.text}>{l.icon}{l.text}</LegendItem>
            ))}
          </LegendItems>
        </LegendRow>
        <Kpis>
          {kpis.map((k) => (
            <Kpi key={k.label}>
              {k.icon}
              <KpiText $color={k.color}>
                {k.label}
                <strong>{k.value}</strong>
              </KpiText>
            </Kpi>
          ))}
        </Kpis>
      </footer>

      <Overlay>
        <Dialog role="dialog" aria-label="Delete">
          <DialogBar>
            Delete
            <CloseButton aria-label="Close dialog">
              <Svg size={13}>
                <path d="M2 2l9 9M11 2l-9 9" stroke="#6da8d5" strokeWidth="4" />
              </Svg>
            </CloseButton>
          </DialogBar>
          <OptionList role="listbox" aria-label="Shifts to delete">
            <Option role="option" aria-selected $selected>
              <Svg size={10}>
                <path d="M0 3.500h4V0l6 5-6 5V6.500H0z" fill="#1d5c80" />
              </Svg>
              Delete Day Shifts
            </Option>
            <Option role="option" aria-selected={false} $selected={false}>
              <Svg size={10}>{null}</Svg>
              Delete Week Shifts
            </Option>
          </OptionList>
          <DialogRule />
          <DialogActions>
            <PushButton $width={70} $dark>Accept</PushButton>
            <PushButton $width={70} $dark>Cancel</PushButton>
          </DialogActions>
        </Dialog>
      </Overlay>
    </>
  );
}
